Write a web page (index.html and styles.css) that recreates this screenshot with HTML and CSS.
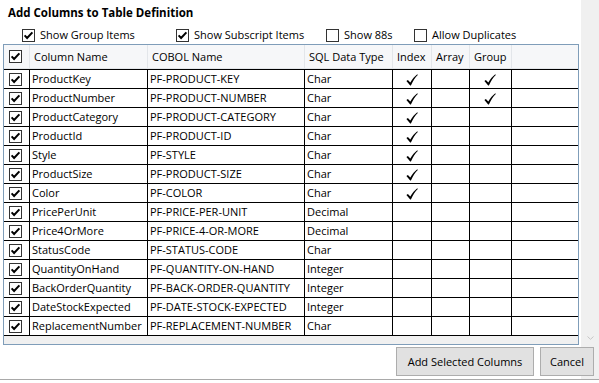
FILE: index.html
```html
<!DOCTYPE html>
<html lang="en">
<head>
  <meta charset="UTF-8" />
  <title>Add Columns to Table Definition</title>
  <link rel="stylesheet" href="styles.css">
</head>
<body>
  <svg class="sprite" xmlns="http://www.w3.org/2000/svg">
    <symbol id="cb-on" viewBox="0 0 13 13"><rect x=".5" y=".5" width="12" height="12" fill="#fff" stroke="#333"/><path d="M2.6 6.4 5.1 9 10.4 3.4" fill="none" stroke="#000" stroke-width="2"/></symbol>
    <symbol id="cb-off" viewBox="0 0 13 13"><rect x=".5" y=".5" width="12" height="12" fill="#fff" stroke="#333"/></symbol>
    <symbol id="tick" viewBox="0 0 12 12"><path d="M.4 6.9 1.9 5.9 4.3 8.5C6.4 5 8.6 2.4 11.3.3L11.8.9C9.2 3.4 6.8 7 4.9 11.6L4.2 11.6Z" fill="#000"/></symbol>
  </svg>

  <div class="dialog">
    <h1 class="title">Add Columns to Table Definition</h1>

    <div class="options">
      <label class="opt"><svg class="cb"><use href="#cb-on"/></svg>Show Group Items</label>
      <label class="opt"><svg class="cb"><use href="#cb-on"/></svg>Show Subscript Items</label>
      <label class="opt"><svg class="cb"><use href="#cb-off"/></svg>Show 88s</label>
      <label class="opt"><svg class="cb"><use href="#cb-off"/></svg>Allow Duplicates</label>
    </div>

    <div class="grid-wrap">
      <div class="grid">
        <div class="head">
          <div class="hc sel"><svg class="cb"><use href="#cb-on"/></svg></div>
          <div class="hc">Column Name</div>
          <div class="hc">COBOL Name</div>
          <div class="hc">SQL Data Type</div>
          <div class="hc">Index</div>
          <div class="hc">Array</div>
          <div class="hc">Group</div>
          <div class="hc fill"></div>
        </div>
        <div class="body" id="rows"></div>
      </div>
      <div class="vscroll"><svg class="chev" viewBox="0 0 7 4"><path d="M.5.5 3.5 3.3 6.5.5" fill="none" stroke="#c6c6c6"/></svg></div>
    </div>

    <div class="actions">
      <button class="btn btn-add">Add Selected Columns</button>
      <button class="btn btn-cancel">Cancel</button>
    </div>
  </div>

<script>
  // name, cobol name, sql type, index, array, group
  const cols = [
    ['ProductKey','PF-PRODUCT-KEY','Char',1,0,1],
    ['ProductNumber','PF-PRODUCT-NUMBER','Char',1,0,1],
    ['ProductCategory','PF-PRODUCT-CATEGORY','Char',1,0,0],
    ['ProductId','PF-PRODUCT-ID','Char',1,0,0],
    ['Style','PF-STYLE','Char',1,0,0],
    ['ProductSize','PF-PRODUCT-SIZE','Char',1,0,0],
    ['Color','PF-COLOR','Char',1,0,0],
    ['PricePerUnit','PF-PRICE-PER-UNIT','Decimal',0,0,0],
    ['Price4OrMore','PF-PRICE-4-OR-MORE','Decimal',0,0,0],
    ['StatusCode','PF-STATUS-CODE','Char',0,0,0],
    ['QuantityOnHand','PF-QUANTITY-ON-HAND','Integer',0,0,0],
    ['BackOrderQuantity','PF-BACK-ORDER-QUANTITY','Integer',0,0,0],
    ['DateStockExpected','PF-DATE-STOCK-EXPECTED','Integer',0,0,0],
    ['ReplacementNumber','PF-REPLACEMENT-NUMBER','Char',0,0,0]
  ];
  const tick = on => on ? '<svg class="tick"><use href="#tick"/></svg>' : '';
  rows.innerHTML = cols.map(c => `
    <div class="row">
      <div class="c sel"><svg class="cb"><use href="#cb-on"/></svg></div>
      <div class="c">${c[0]}</div>
      <div class="c">${c[1]}</div>
      <div class="c">${c[2]}</div>
      <div class="c mark">${tick(c[3])}</div>
      <div class="c mark">${tick(c[4])}</div>
      <div class="c mark">${tick(c[5])}</div>
      <div class="c fill"></div>
    </div>`).join('');
</script>
</body>
</html>
```

FILE: styles.css
```css
*,*::before,*::after{box-sizing:border-box;margin:0;padding:0}
body{font-family:"Open Sans","Noto Sans",Arial,sans-serif;font-size:11px;color:#000;background:#fff}
.sprite{position:absolute;width:0;height:0;overflow:hidden}

/* dialog */
.dialog{height:380px;border-bottom:1px solid #a9a9a9;background:linear-gradient(to right,#fff 581px,#f0f0f0 581px)}
.title{font-size:11.5px;font-weight:700;line-height:16px;padding:5px 0 0 8px}

/* option checkboxes */
.options{display:grid;grid-template-columns:154px 150px 88px auto;margin:6px 0 1px 22px;height:16px}
.opt{display:flex;align-items:center;gap:5px;line-height:16px;white-space:nowrap}
.cb{width:13px;height:13px;flex:none}

/* data grid */
.grid-wrap{display:flex}
.grid{width:576px;height:301px;margin-left:3px;border:1px solid #7f9db9;background:#f0f0f0;overflow:hidden}
.head,.row{display:grid;grid-template-columns:26px 118px 157px 88px 39px 38px 42px 1fr}
.head{height:24px;background:#f6f7f9;border-bottom:1px solid #e3e6ea}
.hc{border-right:1px solid #e3e6ea;padding:1px 0 0 4px;line-height:22px;white-space:nowrap}
.body{border-top:1px solid #000;background:#fff}
.c{height:19px;border-right:1px solid #000;border-bottom:1px solid #000;padding-left:2px;line-height:18px;white-space:nowrap;overflow:hidden}
.fill{border-right:none}
.sel{display:flex;align-items:center;padding-left:5px}
.hc.sel{padding-top:0}
.mark{display:flex;align-items:center;justify-content:center;padding:1px 1px 0 0}
.tick{width:12px;height:12px}

/* window scrollbar stub */
.vscroll{width:17px;margin-left:3px;display:flex;align-items:flex-end;justify-content:center;padding-bottom:5px}
.chev{width:7px;height:4px}

/* buttons */
.actions{display:flex;justify-content:flex-end;gap:6px;margin-top:2px;padding-right:5px}
.btn{height:29px;font-family:inherit;font-size:11px;color:#000;background:#e1e1e1;border:1px solid #adadad}
.btn-add{width:138px}
.btn-cancel{width:54px}
```
